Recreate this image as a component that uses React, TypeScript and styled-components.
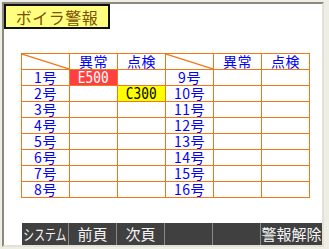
import React, { FC } from 'react';
import styled, { createGlobalStyle, css } from 'styled-components';

const GlobalStyle = createGlobalStyle`
  html, body {
    margin: 0;
    padding: 0;
    background: #efeee4;
  }
  #root {
    width: 329px;
    height: 249px;
    overflow: hidden;
  }
`;

const FLEX = css`
  display: flex;
  justify-content: center;
  align-items: center;
`;

const LINE = '#f07818';
const FONT = `"Noto Sans CJK JP", "DejaVu Sans", sans-serif`;

const Panel = styled.div`
  margin: 2px;
  width: 318px;
  height: 241px;
  background: #ffffff;
  border-style: solid;
  border-width: 2px;
  border-color: #8c8a7c #e4e2d6 #e4e2d6 #8c8a7c;
  display: flex;
  flex-direction: column;
  font-family: ${FONT};
`;

const Title = styled.div`
  ${FLEX};
  box-sizing: border-box;
  width: 106px;
  height: 25px;
  background: #ffff80;
  border: 2px solid #101010;
  color: #805000;
  font-size: 16px;
  letter-spacing: 0.5px;
  line-height: 20px;
`;

const Grid = styled.div`
  margin: 24px 0 0 17px;
  display: grid;
  grid-template-columns: repeat(6, 48px);
  grid-auto-rows: 16px;
  width: 288px;
  border-top: 1px solid ${LINE};
  border-left: 1px solid ${LINE};
`;

type CellKind = 'plain' | 'alarm' | 'check';

const Cell = styled.div<{ $kind?: CellKind }>`
  ${FLEX};
  position: relative;
  box-sizing: border-box;
  border-right: 1px solid ${LINE};
  border-bottom: 1px solid ${LINE};
  color: #0000ff;
  background: ${({ $kind }) =>
    $kind === 'alarm' ? '#ff4040' : $kind === 'check' ? '#ffff00' : 'transparent'};
`;

const HeadText = styled.span`
  display: block;
  font-size: 14px;
  height: 15px;
  line-height: 15px;
  letter-spacing: 0.5px;
`;

const NoText = styled.span`
  display: block;
  font-size: 14px;
  height: 15px;
  line-height: 15px;
  letter-spacing: 0.5px;
`;

const Code = styled.span<{ $light?: boolean }>`
  display: block;
  font-family: "DejaVu Sans Mono", "Liberation Mono", monospace;
  font-size: 16px;
  height: 15px;
  line-height: 15px;
  color: ${({ $light }) => ($light ? '#ffffff' : '#000000')};
  transform: scaleX(0.8);
`;

const Diagonal = styled.svg`
  position: absolute;
  left: 0;
  top: 0;
  width: 47px;
  height: 15px;
`;

const Bar = styled.div`
  margin: auto 0 0 18px;
  height: 22px;
  background: #404040;
  display: grid;
  grid-template-columns: 47px 48px 48px 48px 48px 1fr;
`;

const BarButton = styled.div<{ $narrow?: boolean }>`
  ${FLEX};
  border-right: 1px solid #8a8a8a;
  color: #f4f4f4;
  white-space: nowrap;
  overflow: hidden;
  &:last-child {
    border-right: none;
  }
  span {
    display: block;
    font-size: 15px;
    height: 18px;
    line-height: 18px;
    transform: ${({ $narrow }) => ($narrow ? 'scaleX(0.72)' : 'none')};
  }
`;

const Corner: FC = () => (
  <Diagonal viewBox="0 0 47 15">
    <line x1="0" y1="0" x2="47" y2="15" stroke={LINE} strokeWidth="1.2" />
  </Diagonal>
);

const codes: Record<number, { alarm?: string; check?: string }> = {
  1: { alarm: 'E500' },
  2: { check: 'C300' },
};

const App: FC = () => {
  const rows = Array.from({ length: 8 }, (_, i) => i + 1);
  return (
    <>
      <GlobalStyle />
      <Panel>
        <Title>ボイラ警報</Title>
        <Grid>
          <Cell><Corner /></Cell>
          <Cell><HeadText>異常</HeadText></Cell>
          <Cell><HeadText>点検</HeadText></Cell>
          <Cell><Corner /></Cell>
          <Cell><HeadText>異常</HeadText></Cell>
          <Cell><HeadText>点検</HeadText></Cell>
          {rows.map(n => {
            const a = codes[n] || {};
            const b = codes[n + 8] || {};
            return (
              <React.Fragment key={n}>
                <Cell><NoText>{n}号</NoText></Cell>
                <Cell $kind={a.alarm ? 'alarm' : 'plain'}>{a.alarm && <Code $light>{a.alarm}</Code>}</Cell>
                <Cell $kind={a.check ? 'check' : 'plain'}>{a.check && <Code>{a.check}</Code>}</Cell>
                <Cell><NoText>{n + 8}号</NoText></Cell>
                <Cell $kind={b.alarm ? 'alarm' : 'plain'}>{b.alarm && <Code $light>{b.alarm}</Code>}</Cell>
                <Cell $kind={b.check ? 'check' : 'plain'}>{b.check && <Code>{b.check}</Code>}</Cell>
              </React.Fragment>
            );
          })}
        </Grid>
        <Bar>
          <BarButton $narrow><span>システム</span></BarButton>
          <BarButton><span>前頁</span></BarButton>
          <BarButton><span>次頁</span></BarButton>
          <BarButton />
          <BarButton />
          <BarButton><span>警報解除</span></BarButton>
        </Bar>
      </Panel>
    </>
  );
};

export default App;
